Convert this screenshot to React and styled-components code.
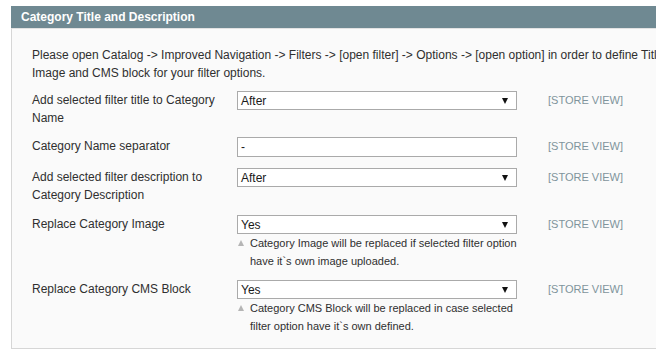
import React from 'react'
import styled, { createGlobalStyle } from 'styled-components'

const GlobalStyle = createGlobalStyle`
    body {
        margin: 0;
        background: #ffffff;
        font-family: "Liberation Sans", Arial, sans-serif;
    }
`

const rows = [
    { label: 'Add selected filter title to Category Name', kind: 'select', value: 'After', gap: 10 },
    { label: 'Category Name separator', kind: 'input', value: '-', gap: 11 },
    { label: 'Add selected filter description to Category Description', kind: 'select', value: 'After', gap: 11 },
    {
        label: 'Replace Category Image',
        kind: 'select',
        value: 'Yes',
        gap: 10,
        note: 'Category Image will be replaced if selected filter option have it`s own image uploaded.',
    },
    {
        label: 'Replace Category CMS Block',
        kind: 'select',
        value: 'Yes',
        gap: 10,
        note: 'Category CMS Block will be replaced in case selected filter option have it`s own defined.',
    },
]

function App() {
    return (
        <Page>
            <GlobalStyle />
            <Clip>
                <Header>Category Title and Description</Header>
                <Fieldset>
                    <Intro>
                        Please open Catalog -&gt; Improved Navigation -&gt; Filters -&gt; [open filter] -&gt; Options -&gt; [open option] in order to define Title, Image and CMS block for your filter options.
                    </Intro>
                    {rows.map((row) => (
                        <Row key={row.label} $gap={row.gap}>
                            <Label>{row.label}</Label>
                            <Value>
                                {row.kind === 'select' ? (
                                    <SelectBox>
                                        <span>{row.value}</span>
                                        <Arrow />
                                    </SelectBox>
                                ) : (
                                    <TextInput defaultValue={row.value} />
                                )}
                                {row.note && <Note>{row.note}</Note>}
                            </Value>
                            <Scope>[STORE VIEW]</Scope>
                        </Row>
                    ))}
                </Fieldset>
            </Clip>
        </Page>
    )
}

export default App

const Page = styled.div`
    padding: 6px 0 0 11px;
    width: 656px;
    box-sizing: border-box;
`

const Clip = styled.div`
    width: 645px;
    overflow: hidden;
`

const Header = styled.div`
    width: 700px;
    height: 22px;
    background: #6f8992;
    color: #ffffff;
    font-size: 12px;
    font-weight: bold;
    line-height: 22px;
    padding-left: 10px;
    box-sizing: border-box;
`

const Fieldset = styled.div`
    width: 700px;
    box-sizing: border-box;
    background: #fafafa;
    border: 1px solid #d6d6d6;
    border-top-color: #e2e2e2;
    padding: 17px 0 3px 20px;
    color: #2f2f2f;
    font-size: 12px;
    line-height: 18px;
`

const Intro = styled.p`
    margin: 0 0 9px;
    width: 640px;
`

const Row = styled.div`
    display: grid;
    grid-template-columns: 205px 280px auto;
    align-items: start;
    padding-bottom: ${(p) => p.$gap}px;
`

const Label = styled.div`
    width: 190px;
`

const Value = styled.div`
    display: flex;
    flex-direction: column;
`

const SelectBox = styled.div`
    height: 19px;
    box-sizing: border-box;
    border: 1px solid #aaaaaa;
    background: #ffffff;
    display: flex;
    align-items: center;
    justify-content: space-between;
    padding: 0 8px 0 3px;
    color: #1a1a1a;
    font-size: 12px;
`

const Arrow = styled.span`
    width: 0;
    height: 0;
    border-left: 3.5px solid transparent;
    border-right: 3.5px solid transparent;
    border-top: 6px solid #111111;
`

const TextInput = styled.input`
    height: 20px;
    box-sizing: border-box;
    border: 1px solid #aaaaaa;
    background: #ffffff;
    padding: 0 3px;
    margin: 0;
    font: 12px "Liberation Sans", Arial, sans-serif;
    color: #1a1a1a;
    outline: none;
`

const Note = styled.p`
    margin: 0;
    position: relative;
    padding-left: 13px;
    font-size: 11px;
    line-height: 18px;
    color: #2f2f2f;
    &::before {
        content: '';
        position: absolute;
        left: 1px;
        top: 6px;
        border-left: 3.5px solid transparent;
        border-right: 3.5px solid transparent;
        border-bottom: 6px solid #b5b5b5;
    }
`

const Scope = styled.div`
    padding-left: 31px;
    color: #7f949c;
    font-size: 11px;
    line-height: 18px;
`
